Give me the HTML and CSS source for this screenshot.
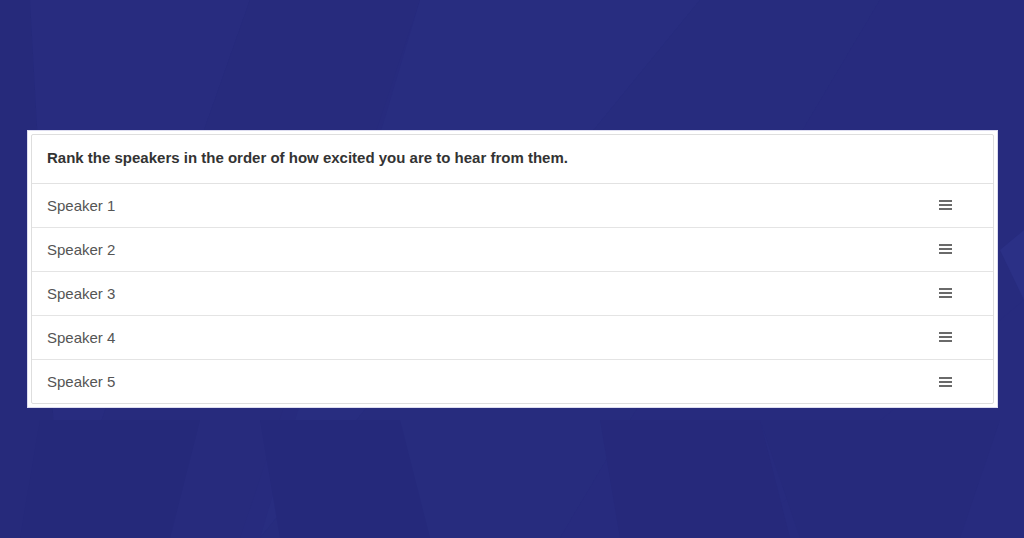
FILE: index.html
```html
<!DOCTYPE html>
<html>
<head>
<meta charset="utf-8">
<link rel="stylesheet" href="styles.css">
</head>
<body>
<svg class="bg" viewBox="0 0 1024 538" preserveAspectRatio="none" aria-hidden="true">
  <rect width="1024" height="538" fill="#272b7e"/>
  <polygon points="0,0 30,0 60,538 0,538" fill="#262a7b"/>
  <polygon points="30,0 250,0 60,538" fill="#282c7f"/>
  <polygon points="250,0 420,0 240,538 60,538" fill="#272b7d"/>
  <polygon points="420,0 700,0 260,538" fill="#282d80"/>
  <polygon points="700,0 880,0 560,538 260,538" fill="#272c7e"/>
  <polygon points="880,0 1024,0 1024,300 740,538 560,538" fill="#272b7e"/>
  <polygon points="40,420 200,420 170,538 20,538" fill="#25297a"/>
  <polygon points="260,420 400,420 430,538 280,538" fill="#25297b"/>
  <polygon points="600,420 760,420 790,538 620,538" fill="#26297b"/>
  <polygon points="760,420 1000,420 960,538 800,538" fill="#262a7c"/>
  <polygon points="1000,250 1024,230 1024,300" fill="#2b3086"/>
</svg>
<main class="frame">
  <section class="card">
    <header class="question">Rank the speakers in the order of how excited you are to hear from them.</header>
    <ul class="list">
      <li class="item"><span>Speaker 1</span><i class="handle"></i></li>
      <li class="item"><span>Speaker 2</span><i class="handle"></i></li>
      <li class="item"><span>Speaker 3</span><i class="handle"></i></li>
      <li class="item"><span>Speaker 4</span><i class="handle"></i></li>
      <li class="item"><span>Speaker 5</span><i class="handle"></i></li>
    </ul>
  </section>
</main>
</body>
</html>
```

FILE: styles.css
```css
html, body {
  margin: 0;
  padding: 0;
  height: 100%;
  overflow: hidden;
}
body {
  background: #272b7e;
  font-family: "Liberation Sans", Arial, Helvetica, sans-serif;
  padding-top: 130px;
  padding-left: 27px;
  box-sizing: border-box;
  position: relative;
}
.bg {
  position: absolute;
  left: 0;
  top: 0;
  width: 1024px;
  height: 538px;
  z-index: 0;
}
.frame {
  position: relative;
  z-index: 1;
  width: 971px;
  box-sizing: border-box;
  background: #fff;
  padding: 3px;
  border: 1px solid #dcdcf0;
}
.card {
  border: 1px solid #dedede;
  border-radius: 2px;
  background: #fff;
}
.question {
  height: 49px;
  box-sizing: border-box;
  padding: 14px 15px 0;
  font-size: 15px;
  font-weight: bold;
  color: #333;
  border-bottom: 1px solid #e2e2e2;
  line-height: 17px;
}
.list {
  list-style: none;
  margin: 0;
  padding: 0;
}
.item {
  display: flex;
  align-items: center;
  justify-content: space-between;
  height: 44px;
  box-sizing: border-box;
  padding: 0 41px 1px 15px;
  font-size: 15px;
  color: #555;
  border-bottom: 1px solid #e4e4e4;
}
.item:last-child {
  border-bottom: none;
  height: 43px;
  padding-bottom: 0;
}
.handle {
  display: block;
  width: 13px;
  height: 10px;
  background:
    linear-gradient(#6a6a6a, #6a6a6a) 0 0 / 13px 2px no-repeat,
    linear-gradient(#6a6a6a, #6a6a6a) 0 4px / 13px 2px no-repeat,
    linear-gradient(#6a6a6a, #6a6a6a) 0 8px / 13px 2px no-repeat;
}
```
